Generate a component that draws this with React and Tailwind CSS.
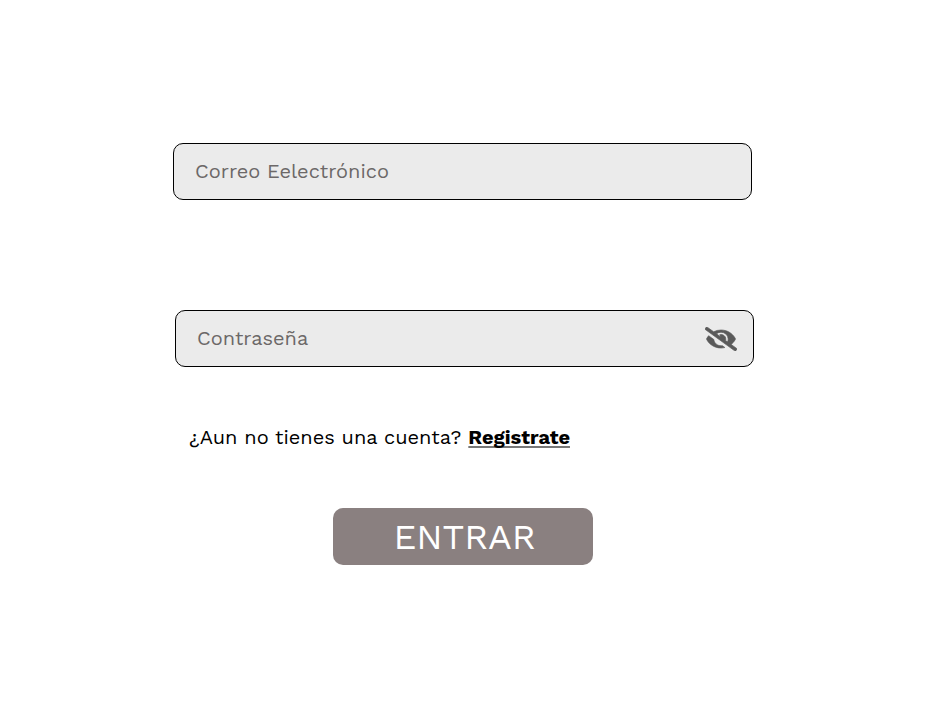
import { FaEyeSlash } from "react-icons/fa";

export default function App() {
  return (
    <main className="flex h-[709px] w-[928px] flex-col overflow-hidden bg-white pt-[143px] font-['Work_Sans','Open_Sans',sans-serif] text-black">
      <div className="ml-[173px] flex h-[57px] w-[579px] items-center rounded-[10px] border border-black bg-[#ebebeb] pb-[2px] pl-[21px] text-[20px] text-[#6c6868]">
        <span className="inline-block whitespace-nowrap">Correo Eelectrónico</span>
      </div>
      <div className="mt-[110px] ml-[175px] flex h-[57px] w-[579px] items-center justify-between rounded-[10px] border border-black bg-[#ebebeb] pr-4 pl-[21px] text-[20px] text-[#6c6868]">
        <span className="inline-block pb-[2px] whitespace-nowrap">Contraseña</span>
        <FaEyeSlash preserveAspectRatio="none" className="h-[24px] w-8 stroke-[#5a5a5a] stroke-[14px] text-[#5a5a5a]" />
      </div>
      <p className="mt-[55px] ml-[189px] flex h-[30px] items-center gap-[7px] text-[20px] whitespace-nowrap">
        <span>¿Aun no tienes una cuenta?</span>
        <a className="font-bold underline decoration-[#777] decoration-2 underline-offset-[2px] [text-decoration-skip-ink:none]">Registrate</a>
      </p>
      <button className="mt-[56px] ml-[333px] h-[57px] w-[260px] rounded-[10px] bg-[#8a8080] pl-[3px] text-[36px] tracking-[-0.1px] text-white">
        ENTRAR
      </button>
    </main>
  );
}
